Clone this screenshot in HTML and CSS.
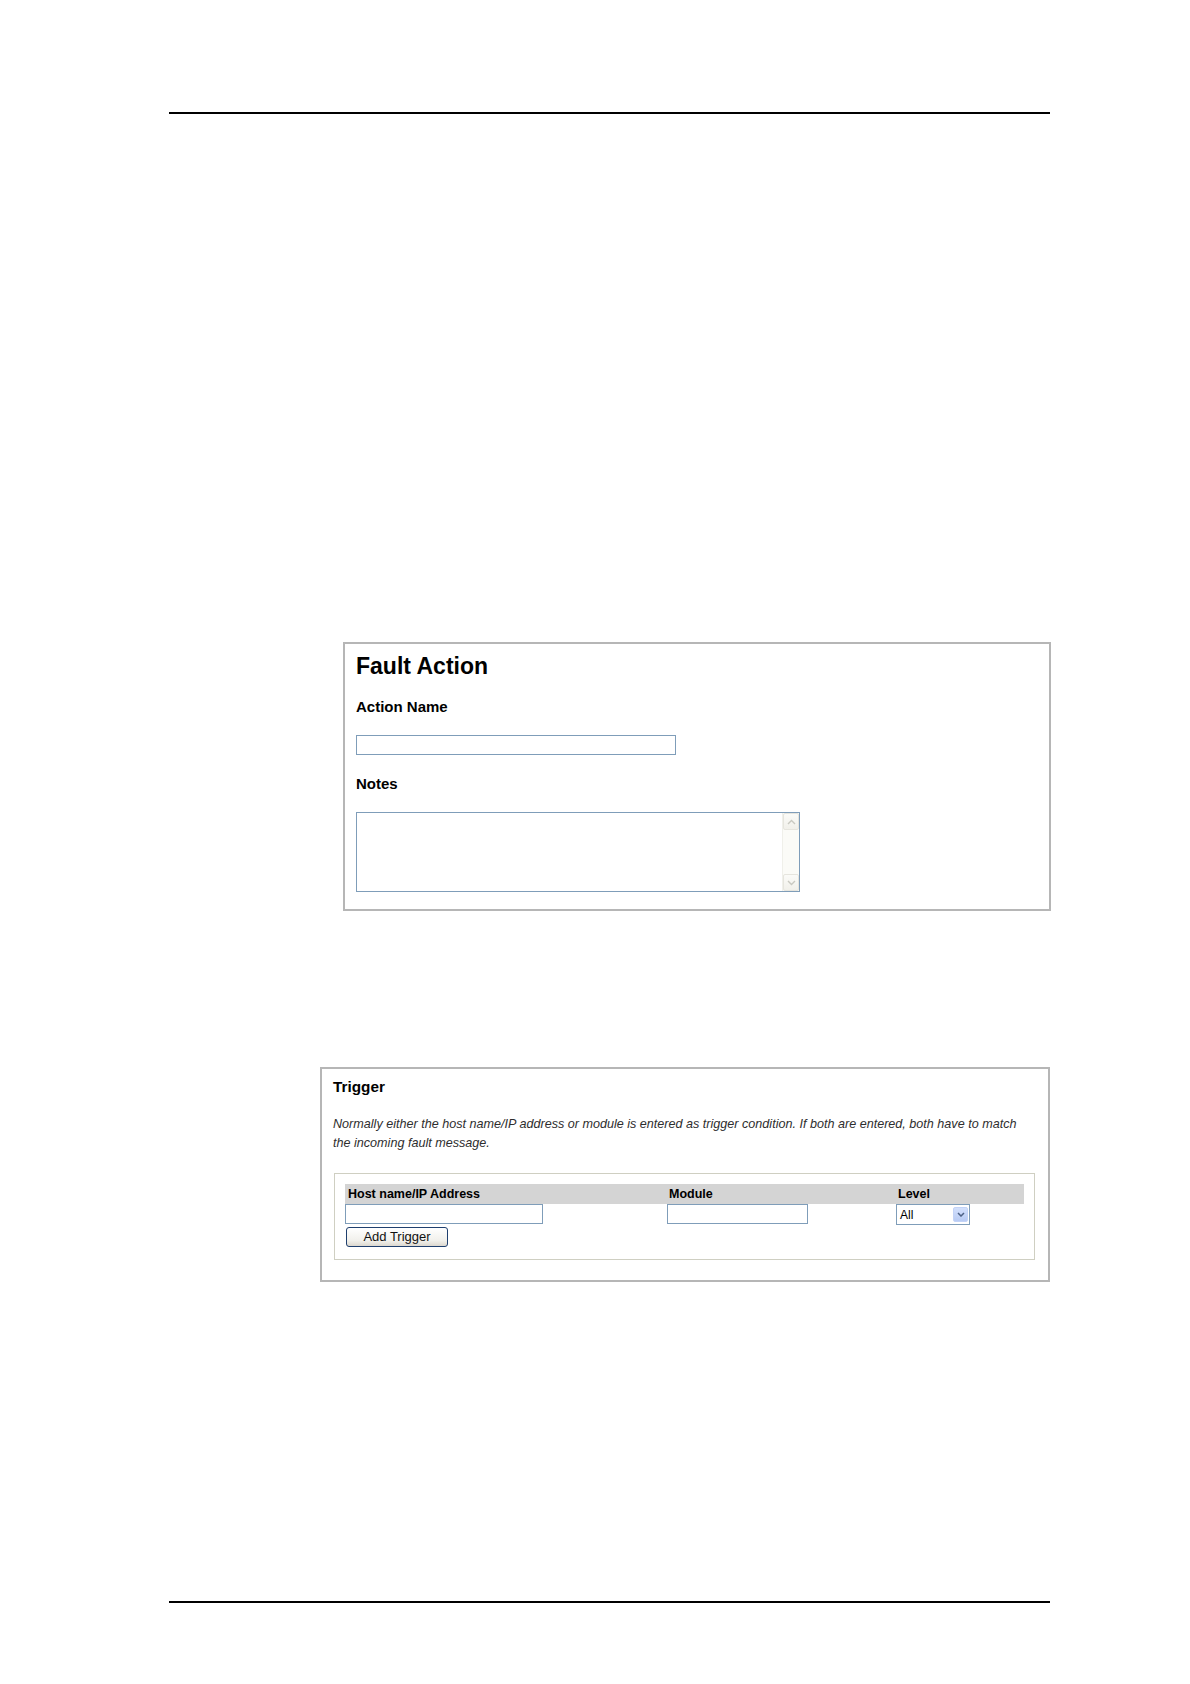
FILE: index.html
```html
<!DOCTYPE html>
<html lang="en">
<head>
<meta charset="utf-8">
<title>Fault Action</title>
<link rel="stylesheet" href="styles.css">
</head>
<body>
<div class="page">
  <div class="rule"></div>

  <section class="panel fault">
    <h2 class="fault-title">Fault Action</h2>
    <div class="label first">Action Name</div>
    <input class="text-input name-input" type="text">
    <div class="label notes-label">Notes</div>
    <div class="textarea">
      <div class="textarea-body"></div>
      <div class="scrollbar">
        <div class="sb-btn">
          <svg width="9" height="6" viewBox="0 0 9 6"><path d="M1 5 L4.5 1.5 L8 5" fill="none" stroke="#c9c9c1" stroke-width="1.4"/></svg>
        </div>
        <div class="sb-track"></div>
        <div class="sb-btn">
          <svg width="9" height="6" viewBox="0 0 9 6"><path d="M1 1 L4.5 4.5 L8 1" fill="none" stroke="#c9c9c1" stroke-width="1.4"/></svg>
        </div>
      </div>
    </div>
  </section>

  <section class="panel trigger">
    <h3 class="trigger-title">Trigger</h3>
    <p class="hint">Normally either the host name/IP address or module is entered as trigger condition. If both are entered, both have to match<br>the incoming fault message.</p>
    <div class="fieldset">
      <div class="grid">
        <div class="th">Host name/IP Address</div>
        <div class="th">Module</div>
        <div class="th">Level</div>
        <div class="td"><input class="text-input host-input" type="text"></div>
        <div class="td"><input class="text-input module-input" type="text"></div>
        <div class="td">
          <div class="select">
            <span class="select-value">All</span>
            <span class="select-arrow">
              <svg width="8" height="5" viewBox="0 0 8 5"><path d="M1 1 L4 4 L7 1" fill="none" stroke="#4d6185" stroke-width="1.5"/></svg>
            </span>
          </div>
        </div>
        <div class="td btn-cell"><button class="btn" type="button">Add Trigger</button></div>
      </div>
    </div>
  </section>

  <div class="rule bottom"></div>
</div>
</body>
</html>
```

FILE: styles.css
```css
* {
  box-sizing: border-box;
}

html, body {
  margin: 0;
  padding: 0;
  background: #ffffff;
}

body {
  font-family: "Liberation Sans", Arial, sans-serif;
  color: #000000;
}

.page {
  width: 1190px;
  min-height: 1684px;
  padding-top: 112px;
  padding-left: 169px;
}

.rule {
  width: 881px;
  height: 2px;
  background: #000000;
}

.rule.bottom {
  margin-top: 319px;
}

.panel {
  border: 2px solid #b6b6b6;
  background: #ffffff;
}

/* Fault Action panel */
.fault {
  margin-top: 528px;
  margin-left: 174px;
  width: 708px;
  height: 269px;
  padding: 9px 11px 0 11px;
}

.fault-title {
  margin: 0;
  font-size: 23px;
  line-height: 26px;
  font-weight: bold;
}

.label {
  font-size: 15px;
  line-height: 18px;
  font-weight: bold;
  margin-top: 19px;
}

.label.notes-label {
  margin-top: 20px;
}

.text-input {
  display: block;
  margin: 0;
  padding: 0 2px;
  height: 20px;
  border: 1px solid #7f9db9;
  background: #ffffff;
  font-family: "Liberation Sans", Arial, sans-serif;
  font-size: 12px;
  outline: none;
}

.name-input {
  margin-top: 19px;
  width: 320px;
}

.textarea {
  margin-top: 19px;
  width: 444px;
  height: 80px;
  border: 1px solid #7f9db9;
  display: flex;
  background: #ffffff;
}

.textarea-body {
  flex: 1;
}

.scrollbar {
  width: 17px;
  display: flex;
  flex-direction: column;
  background: #fbfbf7;
  border-left: 1px solid #f0f0ea;
}

.sb-btn {
  height: 17px;
  border: 1px solid #e6e5de;
  border-radius: 2px;
  background: linear-gradient(#fbfbf8, #f1f0ea);
  display: flex;
  align-items: center;
  justify-content: center;
}

.sb-track {
  flex: 1;
}

/* Trigger panel */
.trigger {
  margin-top: 156px;
  margin-left: 151px;
  width: 730px;
  height: 215px;
  padding: 9px 11px 0 11px;
}

.trigger-title {
  margin: 0;
  font-size: 15.3px;
  line-height: 18px;
  font-weight: bold;
}

.hint {
  margin: 19px 0 0 0;
  font-size: 12.6px;
  line-height: 19px;
  font-style: italic;
  color: #2e2e2e;
  white-space: nowrap;
}

.fieldset {
  margin: 20px 2px 0 1px;
  border: 1px solid #cfcfc2;
  padding: 10px 10px 12px 10px;
}

.grid {
  display: grid;
  grid-template-columns: 322px 229px 1fr;
}

.th {
  background: #d4d4d4;
  height: 20px;
  line-height: 20px;
  font-size: 12.5px;
  font-weight: bold;
  padding-left: 3px;
}

.th:nth-child(2),
.th:nth-child(3) {
  padding-left: 2px;
}

.td {
  height: 21px;
}

.host-input {
  width: 198px;
}

.module-input {
  width: 141px;
}

.select {
  width: 74px;
  height: 21px;
  border: 1px solid #7f9db9;
  display: flex;
  align-items: center;
  justify-content: space-between;
  padding-left: 3px;
  padding-right: 1px;
  font-size: 12px;
  background: #ffffff;
}

.select-arrow {
  width: 15px;
  height: 15px;
  border: 1px solid #c3d3f7;
  border-radius: 2px;
  background: linear-gradient(#d3e0fc, #b8cbf4);
  display: flex;
  align-items: center;
  justify-content: center;
}

.btn-cell {
  grid-column: 1 / 4;
  height: auto;
  padding-top: 2px;
}

.btn {
  display: block;
  margin: 0 0 0 1px;
  width: 102px;
  height: 20px;
  padding: 0;
  border: 1px solid #1f3f6e;
  border-radius: 3px;
  background: linear-gradient(#ffffff, #f1f0eb 70%, #dcd8cf);
  font-family: "Liberation Sans", Arial, sans-serif;
  font-size: 13px;
  line-height: 18px;
  color: #111111;
}
```
